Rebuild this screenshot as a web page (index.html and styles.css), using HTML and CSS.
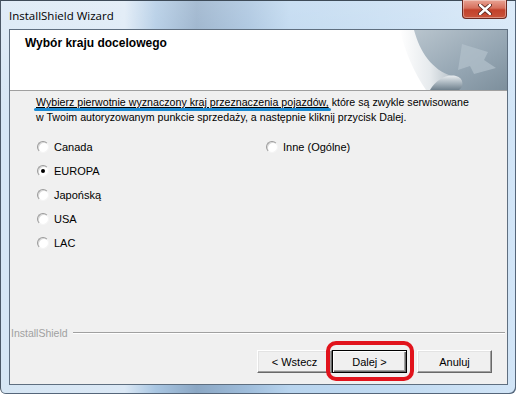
FILE: index.html
```html
<!DOCTYPE html>
<html>
<head>
    <title>InstallShield Wizard</title>
    <link rel="stylesheet" href="styles.css">
</head>
<body>
    <div class="window">
        <div class="titlebar">
            <span class="title">InstallShield Wizard</span>
            <button class="close" aria-label="Zamknij">
                <svg width="14" height="11" viewBox="0 0 14 11">
                    <path d="M2 1 L12 10 M12 1 L2 10" stroke="#4a1a14" stroke-width="4" stroke-linecap="round"/>
                    <path d="M2 1 L12 10 M12 1 L2 10" stroke="#fff" stroke-width="2.4" stroke-linecap="round"/>
                </svg>
            </button>
        </div>
        <div class="client">
            <div class="header">
                <h1>Wybór kraju docelowego</h1>
                <svg class="curl" width="107" height="60" viewBox="0 0 107 60">
                    <defs>
                        <linearGradient id="bg" x1="0" y1="0" x2="1" y2="1">
                            <stop offset="0" stop-color="#b9c5ce"/>
                            <stop offset="0.6" stop-color="#94a5b2"/>
                            <stop offset="1" stop-color="#7d8f9c"/>
                        </linearGradient>
                        <linearGradient id="page" x1="0" y1="0" x2="1" y2="0">
                            <stop offset="0" stop-color="#ffffff"/>
                            <stop offset="0.5" stop-color="#e6eaed"/>
                            <stop offset="1" stop-color="#a9b5be"/>
                        </linearGradient>
                        <linearGradient id="roll" x1="0" y1="0" x2="0" y2="1">
                            <stop offset="0" stop-color="#e8ecef"/>
                            <stop offset="0.5" stop-color="#aab6bf"/>
                            <stop offset="1" stop-color="#6f808d"/>
                        </linearGradient>
                    </defs>
                    <path d="M12 0 H107 V60 H40 C28 40 18 22 12 0 Z" fill="url(#bg)"/>
                    <path d="M62 14 L88 22 L84 30 L96 38 L74 44 L70 36 L58 40 Z" fill="#b4c2cc" opacity="0.7"/>
                    <path d="M0 0 H14 C20 22 32 40 52 46 C60 48 62 58 58 60 H26 C14 42 5 22 0 0 Z" fill="url(#page)"/>
                    <path d="M30 60 C36 50 46 44 56 46 C64 48 64 57 59 60 Z" fill="url(#roll)"/>
                </svg>
            </div>
            <div class="content">
                <p class="intro"><span class="mark">Wybierz pierwotnie wyznaczony kraj przeznaczenia pojazdów,</span> które są zwykle serwisowane w Twoim autoryzowanym punkcie sprzedaży, a następnie kliknij przycisk Dalej.</p>
                <div class="options">
                    <div class="column">
                        <label class="option"><span class="radio"></span>Canada</label>
                        <label class="option"><span class="radio checked"></span>EUROPA</label>
                        <label class="option"><span class="radio"></span>Japońską</label>
                        <label class="option"><span class="radio"></span>USA</label>
                        <label class="option"><span class="radio"></span>LAC</label>
                    </div>
                    <div class="column">
                        <label class="option"><span class="radio"></span>Inne (Ogólne)</label>
                    </div>
                </div>
            </div>
            <div class="brand">
                <span>InstallShield</span>
                <span class="rule"></span>
            </div>
            <div class="actions">
                <button class="btn">&lt; Wstecz</button>
                <span class="marked"><button class="btn default">Dalej &gt;</button></span>
                <button class="btn">Anuluj</button>
            </div>
        </div>
    </div>
</body>
</html>
```

FILE: styles.css
```css
* {
    box-sizing: border-box;
}

body {
    margin: 0;
    font-family: "Liberation Sans", Arial, sans-serif;
    font-size: 11px;
    color: #000;
}

.window {
    width: 516px;
    height: 394px;
    padding: 0 8px 9px;
    display: flex;
    flex-direction: column;
    border-left: 1px solid #4b5866;
    border-top: 1px solid #3e4b58;
    border-bottom-left-radius: 6px;
    border-bottom-right-radius: 6px;
    background:
        linear-gradient(180deg, rgba(255,255,255,0.25), rgba(255,255,255,0) 30%),
        linear-gradient(90deg, #d6e6f4 0%, #dbe8f5 24%, #a9c6e2 30%, #8ba7c4 38%, #9fbddb 48%, #b8d4ee 56%, #c4dcf2 80%, #d2e5f7 100%);
    box-shadow: inset -1px -1px 0 #55667a;
}

.titlebar {
    height: 28px;
    display: flex;
    justify-content: space-between;
    align-items: flex-start;
}

.title {
    margin-top: 7px;
    font-family: "Open Sans", "Noto Sans", sans-serif;
    font-size: 11.5px;
    color: #000;
}

.close {
    width: 45px;
    height: 19px;
    margin-right: 1px;
    margin-top: -1px;
    padding: 0;
    display: flex;
    align-items: center;
    justify-content: center;
    border: 1px solid #6b2a22;
    border-top: none;
    border-radius: 0 0 4px 4px;
    background: linear-gradient(180deg, #e9a394 0%, #d6705d 45%, #c2412b 55%, #c9543b 100%);
    box-shadow: inset 0 0 0 1px rgba(255,255,255,0.35);
}

.client {
    flex: 1;
    display: flex;
    flex-direction: column;
    background: #f0f0f0;
    border: 1px solid #5f6f80;
}

.header {
    height: 61px;
    flex: none;
    display: flex;
    justify-content: space-between;
    background: #fff;
    border-bottom: 1px solid #a0a0a0;
}

.header h1 {
    margin: 6px 0 0 15px;
    font-size: 12px;
    font-weight: bold;
}

.curl {
    display: block;
}

.content {
    padding: 4px 0 0 26px;
}

.intro {
    margin: 0;
    width: 438px;
    font-size: 10.65px;
    line-height: 15px;
}

.mark {
    position: relative;
    text-decoration: underline;
}

.mark::after {
    content: '';
    position: absolute;
    left: -2px;
    right: -2px;
    bottom: -3px;
    height: 3px;
    border-radius: 2px;
    background: #1a8ad2;
}

.options {
    margin: 10px 0 0 1px;
    display: grid;
    grid-template-columns: 229px 1fr;
}

.option {
    height: 24px;
    display: flex;
    align-items: center;
    gap: 5px;
}

.radio {
    position: relative;
    width: 12px;
    height: 12px;
    border-radius: 50%;
    background: #fff;
    border: 1px solid;
    border-color: #9a9a9a #f4f4f4 #f4f4f4 #9a9a9a;
    box-shadow: inset 1px 1px 0 #d8d8d8;
}

.radio.checked::after {
    content: '';
    position: absolute;
    left: 3px;
    top: 3px;
    width: 4px;
    height: 4px;
    border-radius: 50%;
    background: #000;
}

.brand {
    margin-top: auto;
    margin-bottom: 10px;
    height: 14px;
    display: flex;
    align-items: center;
    gap: 5px;
    padding: 0 2px 0 1px;
    font-size: 10.5px;
    color: #a0a0a0;
}

.rule {
    flex: 1;
    border-top: 1px solid #a0a0a0;
    border-bottom: 1px solid #fff;
}

.actions {
    display: flex;
    justify-content: flex-end;
    padding: 0 15px 11px 0;
}

.btn {
    width: 75px;
    height: 23px;
    padding: 0;
    font-family: "Liberation Sans", Arial, sans-serif;
    font-size: 11px;
    color: #000;
    background: #f0f0f0;
    border: 1px solid;
    border-color: #fff #696969 #696969 #fff;
    box-shadow: inset -1px -1px 0 #a0a0a0, inset 1px 1px 0 #e3e3e3;
}

.btn.default {
    border: 1px solid #000;
    box-shadow: inset 1px 1px 0 #fff, inset -1px -1px 0 #696969, inset -2px -2px 0 #a0a0a0;
}

.marked {
    position: relative;
    display: flex;
    margin-right: 10px;
}

.marked::after {
    content: '';
    position: absolute;
    left: -6px;
    right: -7px;
    top: -9px;
    bottom: -8px;
    border: 4px solid #e1131c;
    border-radius: 10px;
}
```
